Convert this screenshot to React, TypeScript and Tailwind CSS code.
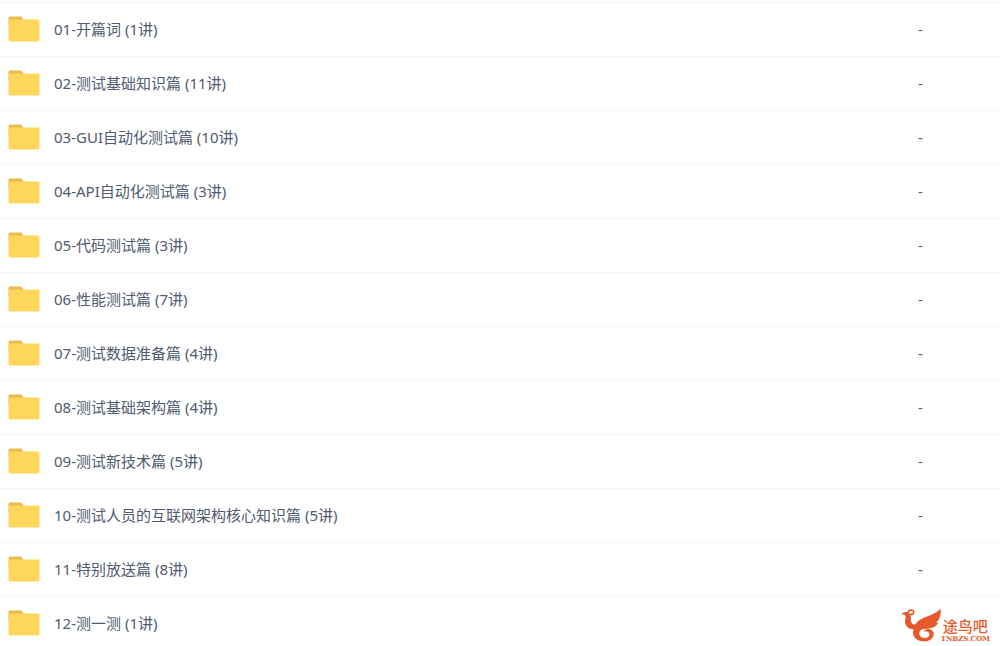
const lessons = [
  { name: "01-开篇词 (1讲)", size: "-" },
  { name: "02-测试基础知识篇 (11讲)", size: "-" },
  { name: "03-GUI自动化测试篇 (10讲)", size: "-" },
  { name: "04-API自动化测试篇 (3讲)", size: "-" },
  { name: "05-代码测试篇 (3讲)", size: "-" },
  { name: "06-性能测试篇 (7讲)", size: "-" },
  { name: "07-测试数据准备篇 (4讲)", size: "-" },
  { name: "08-测试基础架构篇 (4讲)", size: "-" },
  { name: "09-测试新技术篇 (5讲)", size: "-" },
  { name: "10-测试人员的互联网架构核心知识篇 (5讲)", size: "-" },
  { name: "11-特别放送篇 (8讲)", size: "-" },
  { name: "12-测一测 (1讲)", size: "" },
];

function FolderIcon() {
  return (
    <svg aria-hidden="true" viewBox="0 0 32 26" className="h-[26px] w-8 shrink-0">
      <path d="M.5 10V2Q.5 .5 2 .5H12.500Q13.500 .5 14 1.300L15.500 3.500V10Z" fill="#e6bd4f" />
      <path d="M.5 5Q.5 3.500 2 3.500H30Q31.500 3.500 31.500 5V24Q31.500 25.500 30 25.500H2Q.5 25.500 .5 24Z" fill="#ffd65c" />
    </svg>
  );
}

function BirdLogo() {
  return (
    <svg aria-hidden="true" viewBox="0 0 138 120" className="h-10 w-[46px]">
      <path d="M27 28C27 17 42 15 44 24C45 31 37 34 34 29" fill="none" stroke="#e45a2b" strokeWidth="5" strokeLinecap="round" />
      <path
        d="M7 32C12 23 24 21 32 30C39 39 33 47 37 55C41 63 47 64 52 58C63 37 97 41 125 14C127 36 120 50 109 57L119 55C112 69 98 74 82 74C68 75 61 79 61 88C61 96 67 102 77 102C86 102 92 96 91 89C90 83 81 80 73 83C79 71 101 72 104 87C106 102 92 113 73 112C53 111 41 99 42 83C42 80 43 78 44 76C28 76 18 66 18 52C18 44 22 39 19 35C16 31 11 31 7 32Z"
        fill="#e45a2b"
      />
    </svg>
  );
}

export default function App() {
  return (
    <main className="relative min-h-screen bg-white pt-0.5 font-['Noto_Sans','Noto_Sans_CJK_SC',sans-serif] text-[#505a70]">
      <table className="w-full table-fixed border-collapse text-[15px]">
        <tbody>
          {lessons.map(({ name, size }) => (
            <tr key={name} className="group border-t border-[#f4f5f7]">
              <td className="px-2 pt-[13px] pb-[14px] group-last:pb-1">
                <div className="flex items-center gap-[14px]">
                  <FolderIcon />
                  <span className="leading-6">{name}</span>
                </div>
              </td>
              <td className="w-[82px] pt-[13px] pb-[14px] leading-6 text-[#666] group-last:pb-1">{size}</td>
            </tr>
          ))}
        </tbody>
      </table>
      <div className="absolute right-[10px] bottom-0.5 flex items-end text-[#e45a2b]">
        <BirdLogo />
        <div className="-ml-1 flex flex-col items-center gap-0.5 pb-0.5 font-bold">
          <span className="font-['Noto_Sans_CJK_SC',sans-serif] text-[15px] leading-[15px] font-medium">途鸟吧</span>
          <span className="font-['DejaVu_Serif',serif] text-[7px] leading-[7px]">TNBZS.COM</span>
        </div>
      </div>
    </main>
  );
}
